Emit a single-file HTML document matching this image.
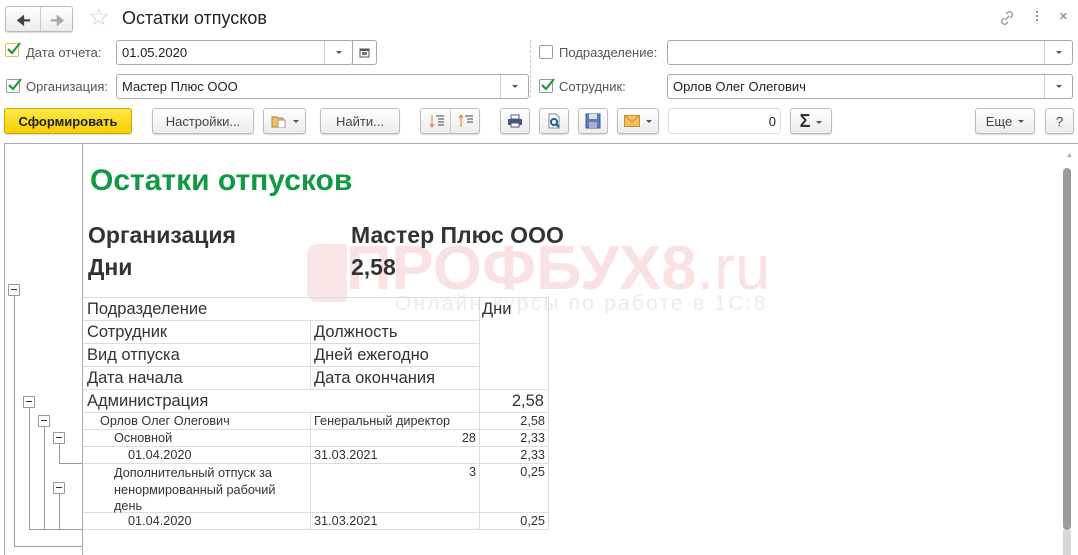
<!DOCTYPE html>
<html><head><meta charset="utf-8">
<style>
*{box-sizing:border-box;margin:0;padding:0}
body{width:1078px;height:555px;background:#fff;font-family:"Liberation Sans",Arial,sans-serif;position:relative;overflow:hidden;color:#333}
.a{position:absolute}
.btn{position:absolute;border:1px solid #bcbcbc;border-radius:3px;background:linear-gradient(#fff,#ececec);box-shadow:0 1px 1px rgba(0,0,0,.15);font-size:13px;color:#444;display:flex;align-items:center;justify-content:center}
.inp{position:absolute;border:1px solid #a9a9a9;border-radius:3px;background:#fff;font-size:13px;color:#222;padding-left:5px;display:flex;align-items:center}
.dd{position:absolute;right:0;top:0;bottom:0;width:28px;border-left:1px solid #ccc}
.dd:after{content:"";position:absolute;left:11px;top:10px;border:3px solid transparent;border-top:3px solid #555}
.lbl{position:absolute;font-size:13px;color:#555}
.cb{position:absolute;width:14px;height:14px;border:1px solid #999;border-radius:2px;background:#fff}
.ck{position:absolute;left:0;top:-3px}
.hl{position:absolute;height:1px;background:#ddd}
.vl{position:absolute;width:1px;background:#ddd}
.t{position:absolute;white-space:nowrap;color:#333}
.tg{position:absolute;background:#999}
.box{position:absolute;width:12px;height:12px;border:1px solid #999;background:#fff;border-radius:1px}
.box:after{content:"";position:absolute;left:2px;top:4px;width:6px;height:1px;background:#333}
.arr{display:inline-block;border:3px solid transparent;border-top:3px solid #555;margin-left:6px;margin-top:3px}
</style></head><body>
<div class="btn" style="left:5px;top:6px;width:68px;height:26px;justify-content:flex-start">
 <span style="position:absolute;left:10px;top:3px;font-size:16px;color:#444">&#129032;</span>
 <span style="position:absolute;left:34px;top:0;bottom:0;width:1px;background:#ccc"></span>
 <span style="position:absolute;left:44px;top:3px;font-size:16px;color:#aaa">&#129034;</span>
</div>
<div class="a" style="left:88px;top:5px;font-size:24px;color:#ccc;line-height:26px">☆</div>
<div class="a" style="left:122px;top:8px;font-size:18px;color:#222">Остатки отпусков</div>
<svg class="a" style="left:998px;top:9px" width="18" height="18" viewBox="0 0 18 18"><g fill="none" stroke="#999" stroke-width="1.3"><path d="M8 5l2-2a3 3 0 014 4l-2 2"/><path d="M10 13l-2 2a3 3 0 01-4-4l2-2"/><path d="M7 11l4-4"/></g></svg>
<div class="a" style="left:1036px;top:11px;width:3px"><div style="width:2px;height:2px;background:#888;margin-bottom:2px"></div><div style="width:2px;height:2px;background:#888;margin-bottom:2px"></div><div style="width:2px;height:2px;background:#888"></div></div>
<div class="a" style="left:1059px;top:8px;font-size:15px;color:#777">×</div>

<div class="cb" style="left:5px;top:43px;border-color:#e8c040"><svg class="ck" width="16" height="16"><path d="M2 8l4 4 8-10" fill="none" stroke="#1a9a3a" stroke-width="2.2"/></svg></div>
<div class="lbl" style="left:26px;top:45px">Дата отчета:</div>
<div class="inp" style="left:116px;top:40px;width:237px;height:25px">01.05.2020<div class="dd"></div></div>
<div class="btn" style="left:352px;top:40px;width:25px;height:25px;border-radius:0 3px 3px 0;box-shadow:none;background:#fff;border-color:#a9a9a9"><svg width="11" height="11"><rect x="1" y="2" width="9" height="8" fill="none" stroke="#555"/><rect x="1" y="2" width="9" height="2" fill="#555"/><rect x="3" y="5" width="5" height="3" fill="#777"/></svg></div>
<div class="a" style="left:530px;top:40px;height:58px;border-left:1px dashed #ccc"></div>
<div class="cb" style="left:539px;top:45px"></div>
<div class="lbl" style="left:559px;top:45px">Подразделение:</div>
<div class="inp" style="left:667px;top:40px;width:406px;height:25px"><div class="dd"></div></div>
<div class="cb" style="left:6px;top:79px"><svg class="ck" width="16" height="16"><path d="M2 8l4 4 8-10" fill="none" stroke="#1a9a3a" stroke-width="2.2"/></svg></div>
<div class="lbl" style="left:26px;top:79px">Организация:</div>
<div class="inp" style="left:116px;top:74px;width:413px;height:25px">Мастер Плюс ООО<div class="dd"></div></div>
<div class="cb" style="left:539px;top:79px"><svg class="ck" width="16" height="16"><path d="M2 8l4 4 8-10" fill="none" stroke="#1a9a3a" stroke-width="2.2"/></svg></div>
<div class="lbl" style="left:559px;top:79px">Сотрудник:</div>
<div class="inp" style="left:667px;top:74px;width:406px;height:25px">Орлов Олег Олегович<div class="dd"></div></div>

<div class="btn" style="left:4px;top:108px;width:128px;height:26px;background:linear-gradient(#ffe84a,#f5d000);border-color:#c9a800;color:#222;font-weight:bold">Сформировать</div>
<div class="btn" style="left:152px;top:108px;width:102px;height:26px">Настройки...</div>
<div class="btn" style="left:263px;top:108px;width:43px;height:26px"><svg width="16" height="14"><path d="M1 3h5l1 1h5v9H1z" fill="#f0c060" stroke="#b08030"/><rect x="7" y="6" width="7" height="8" fill="#fff" stroke="#999"/></svg><span class="arr"></span></div>
<div class="btn" style="left:320px;top:108px;width:80px;height:26px">Найти...</div>
<div class="btn" style="left:420px;top:108px;width:60px;height:26px"><span style="position:absolute;left:29px;top:0;bottom:0;width:1px;background:#ccc"></span>
<svg class="a" style="left:8px;top:5px" width="16" height="14"><path d="M3 1v11M1 10l2 3 2-3" stroke="#f07030" fill="none"/><path d="M7 2h8M9 5h6M9 8h6M9 11h6" stroke="#444"/></svg>
<svg class="a" style="left:37px;top:5px" width="16" height="14"><path d="M3 13V2M1 4l2-3 2 3" stroke="#f07030" fill="none"/><path d="M7 2h8M9 5h6M9 8h6" stroke="#444"/></svg></div>
<div class="btn" style="left:500px;top:108px;width:30px;height:26px"><svg width="16" height="14"><rect x="4" y="1" width="8" height="4" fill="#fff" stroke="#557"/><rect x="1" y="5" width="14" height="6" fill="#3a5a8a"/><rect x="4" y="9" width="8" height="4" fill="#fff" stroke="#557"/></svg></div>
<div class="btn" style="left:539px;top:108px;width:30px;height:26px"><svg width="16" height="16"><path d="M3 1h7l3 3v11H3z" fill="#fff" stroke="#888"/><circle cx="8" cy="9" r="3" fill="none" stroke="#1a5a9a" stroke-width="2"/><path d="M10 11l3 3" stroke="#1a5a9a" stroke-width="2"/></svg></div>
<div class="btn" style="left:578px;top:108px;width:30px;height:26px"><svg width="16" height="16"><rect x="1" y="1" width="14" height="14" fill="#5a7fb0" stroke="#3a5a8a"/><rect x="4" y="1" width="8" height="5" fill="#dde"/><rect x="4" y="9" width="8" height="6" fill="#aac"/></svg></div>
<div class="btn" style="left:617px;top:108px;width:42px;height:26px"><svg width="16" height="12"><rect x="0.5" y="0.5" width="15" height="11" fill="#f4c060" stroke="#c09030"/><path d="M1 1l7 6 7-6" fill="none" stroke="#c09030"/></svg><span class="arr"></span></div>
<div class="inp" style="left:668px;top:108px;width:113px;height:26px;border-color:#ddd;justify-content:flex-end;padding-right:4px">0</div>
<div class="btn" style="left:790px;top:108px;width:42px;height:26px;font-size:18px;color:#333;font-weight:bold">Σ<span class="arr" style="margin-top:5px"></span></div>
<div class="btn" style="left:975px;top:108px;width:60px;height:26px">Еще<span class="arr"></span></div>
<div class="btn" style="left:1045px;top:108px;width:29px;height:26px">?</div>

<div class="a" style="left:4px;top:143px;width:1074px;height:1px;background:#aaa"></div>
<div class="a" style="left:4px;top:143px;width:1px;height:412px;background:#aaa"></div>
<div class="a" style="left:82px;top:144px;width:1px;height:411px;background:#aaa"></div>
<div class="a" style="left:1066px;top:152px;font-size:7px;color:#aaa">▲</div>
<div class="a" style="left:1063px;top:168px;width:8px;height:362px;background:#9b9b9b;border-radius:4px"></div>
<div class="a" style="left:1063px;top:530px;width:8px;height:25px;background:#d8d8d8"></div>

<div class="a" style="left:307px;top:244px;width:40px;height:58px;background:#fbe6e6;border-radius:10px 2px 2px 10px"></div>
<div class="a" style="left:346px;top:236px;font-size:62px;line-height:66px;color:#fbe2e2;font-weight:bold;white-space:nowrap;transform:scaleX(1.02);transform-origin:left">ПРОФБУХ8<span style="font-weight:normal">.ru</span></div>
<div class="a" style="left:395px;top:292px;font-size:21px;color:#ececec;letter-spacing:2.2px;white-space:nowrap">Онлайн-курсы по работе в 1С:8</div>

<div class="t" style="left:90px;top:164px;font-size:30px;font-weight:bold;color:#119944">Остатки отпусков</div>
<div class="t" style="left:88px;top:222px;font-size:23px;font-weight:bold;color:#333">Организация</div>
<div class="t" style="left:351px;top:222px;font-size:23px;font-weight:bold;color:#333">Мастер Плюс ООО</div>
<div class="t" style="left:88px;top:254px;font-size:23px;font-weight:bold;color:#333">Дни</div>
<div class="t" style="left:351px;top:254px;font-size:23px;font-weight:bold;color:#333">2,58</div>

<div class="hl" style="left:83px;top:297px;width:466px"></div>
<div class="hl" style="left:83px;top:320px;width:397px"></div>
<div class="hl" style="left:83px;top:343px;width:397px"></div>
<div class="hl" style="left:83px;top:366px;width:397px"></div>
<div class="hl" style="left:83px;top:389px;width:466px"></div>
<div class="hl" style="left:83px;top:412px;width:466px"></div>
<div class="hl" style="left:83px;top:429px;width:466px"></div>
<div class="hl" style="left:83px;top:446px;width:466px"></div>
<div class="hl" style="left:83px;top:463px;width:466px"></div>
<div class="hl" style="left:83px;top:512px;width:466px"></div>
<div class="hl" style="left:83px;top:529px;width:466px"></div>
<div class="vl" style="left:310px;top:320px;height:69px"></div>
<div class="vl" style="left:310px;top:412px;height:118px"></div>
<div class="vl" style="left:479px;top:297px;height:233px"></div>
<div class="vl" style="left:548px;top:297px;height:233px"></div>

<div style="font-size:16.5px">
<div class="t" style="left:87px;top:300px">Подразделение</div>
<div class="t" style="left:482px;top:300px">Дни</div>
<div class="t" style="left:87px;top:323px">Сотрудник</div>
<div class="t" style="left:314px;top:323px">Должность</div>
<div class="t" style="left:87px;top:346px">Вид отпуска</div>
<div class="t" style="left:314px;top:346px">Дней ежегодно</div>
<div class="t" style="left:87px;top:369px">Дата начала</div>
<div class="t" style="left:314px;top:369px">Дата окончания</div>
<div class="t" style="left:87px;top:392px">Администрация</div>
<div class="t" style="right:534px;top:392px">2,58</div>
</div>
<div style="font-size:12.7px">
<div class="t" style="left:100px;top:414px">Орлов Олег Олегович</div>
<div class="t" style="left:314px;top:414px">Генеральный директор</div>
<div class="t" style="right:533px;top:414px">2,58</div>
<div class="t" style="left:114px;top:431px">Основной</div>
<div class="t" style="right:602px;top:431px">28</div>
<div class="t" style="right:533px;top:431px">2,33</div>
<div class="t" style="left:128px;top:448px">01.04.2020</div>
<div class="t" style="left:314px;top:448px">31.03.2021</div>
<div class="t" style="right:533px;top:448px">2,33</div>
<div class="t" style="left:114px;top:465px;line-height:16.5px">Дополнительный отпуск за<br>ненормированный рабочий<br>день</div>
<div class="t" style="right:602px;top:465px">3</div>
<div class="t" style="right:533px;top:465px">0,25</div>
<div class="t" style="left:128px;top:514px">01.04.2020</div>
<div class="t" style="left:314px;top:514px">31.03.2021</div>
<div class="t" style="right:533px;top:514px">0,25</div>
</div>

<div class="tg" style="left:14px;top:295px;width:1px;height:252px"></div>
<div class="tg" style="left:14px;top:546px;width:68px;height:1px"></div>
<div class="tg" style="left:29px;top:408px;width:1px;height:122px"></div>
<div class="tg" style="left:29px;top:529px;width:53px;height:1px"></div>
<div class="tg" style="left:44px;top:427px;width:1px;height:103px"></div>
<div class="tg" style="left:59px;top:444px;width:1px;height:20px"></div>
<div class="tg" style="left:59px;top:463px;width:23px;height:1px"></div>
<div class="tg" style="left:59px;top:494px;width:1px;height:36px"></div>
<div class="box" style="left:8px;top:284px"></div>
<div class="box" style="left:23px;top:396px"></div>
<div class="box" style="left:38px;top:415px"></div>
<div class="box" style="left:53px;top:432px"></div>
<div class="box" style="left:53px;top:482px"></div>
</body></html>
